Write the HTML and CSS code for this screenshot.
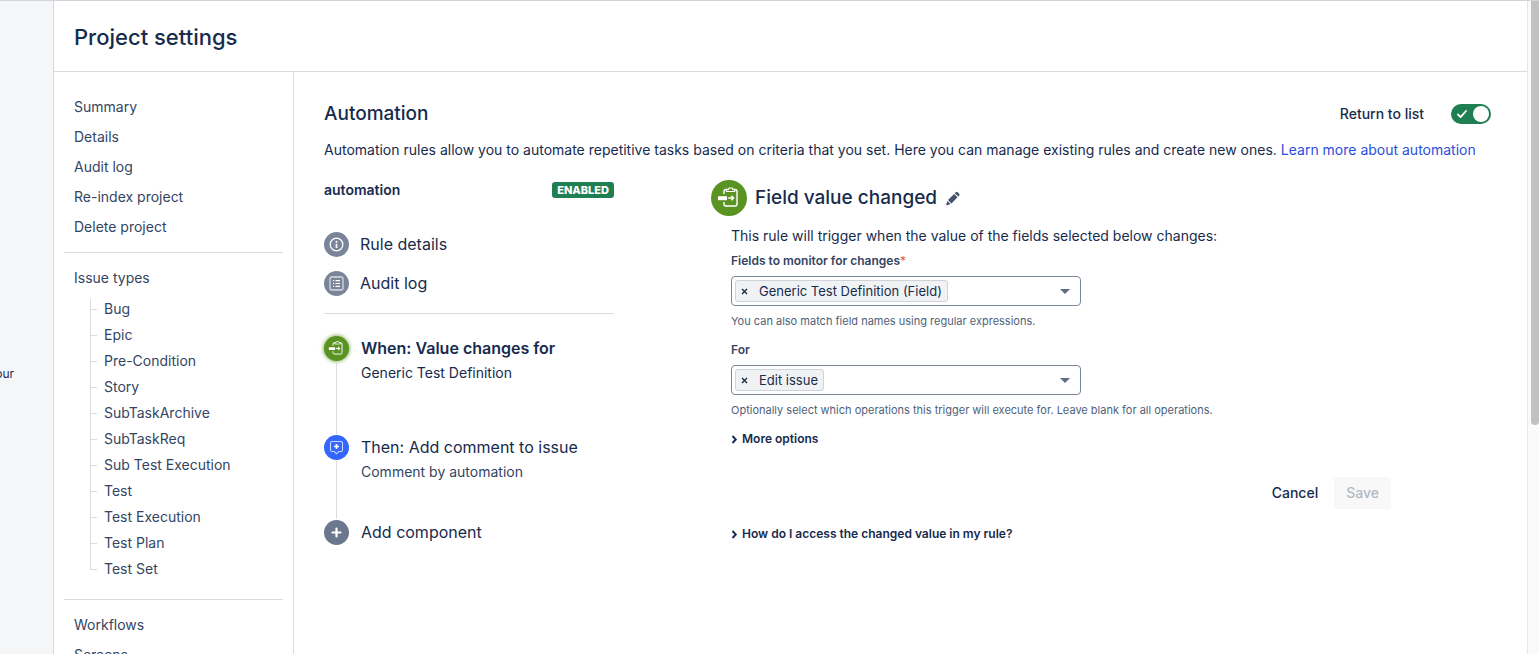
FILE: index.html
```html
<!DOCTYPE html>
<html lang="en">
<head>
    <meta charset="UTF-8">
    <meta name="viewport" content="width=device-width, initial-scale=1.0">
    <title>Project settings - Automation</title>
    <link rel="stylesheet" href="styles.css">
</head>
<body>
    <svg class="sprite" aria-hidden="true">
        <symbol id="icon-trigger" viewBox="0 0 36 36">
            <path d="M13 14v-2.500a2 2 0 0 1 2-2h9a2 2 0 0 1 2 2V24a2 2 0 0 1-2 2h-9a2 2 0 0 1-2-2v-2" fill="none" stroke="#fff" stroke-width="1.400"/>
            <path d="M15.500 11.500V9.500h2l.6-1.500h3l.6 1.500h2v2z" fill="#5b9323" stroke="#fff" stroke-width="1.100"/>
            <path d="M7 16.200h9v4H7z" fill="#fff"/>
            <path d="M17.200 18h5M20.300 15.800l2.300 2.200-2.300 2.200" fill="none" stroke="#fff" stroke-width="1.500"/>
        </symbol>
    </svg>

    <div class="app">
        <aside class="rail"><span class="rail-text">our</span></aside>

        <div class="page">
            <header class="page-header">
                <h1>Project settings</h1>
            </header>

            <div class="page-body">
                <nav class="sidebar">
                    <ul class="nav-group">
                        <li><a href="#">Summary</a></li>
                        <li><a href="#">Details</a></li>
                        <li><a href="#">Audit log</a></li>
                        <li><a href="#">Re-index project</a></li>
                        <li><a href="#">Delete project</a></li>
                    </ul>
                    <div class="nav-group">
                        <a href="#">Issue types</a>
                        <ul class="tree">
                            <li><a href="#">Bug</a></li>
                            <li><a href="#">Epic</a></li>
                            <li><a href="#">Pre-Condition</a></li>
                            <li><a href="#">Story</a></li>
                            <li><a href="#">SubTaskArchive</a></li>
                            <li><a href="#">SubTaskReq</a></li>
                            <li><a href="#">Sub Test Execution</a></li>
                            <li><a href="#">Test</a></li>
                            <li><a href="#">Test Execution</a></li>
                            <li><a href="#">Test Plan</a></li>
                            <li><a href="#">Test Set</a></li>
                        </ul>
                    </div>
                    <ul class="nav-group">
                        <li><a href="#">Workflows</a></li>
                        <li><a href="#">Screens</a></li>
                    </ul>
                </nav>

                <main class="content">
                    <div class="content-header">
                        <h2>Automation</h2>
                        <button class="link-button" type="button">Return to list</button>
                        <label class="toggle">
                            <input type="checkbox" checked aria-label="Rule enabled">
                            <svg width="12" height="12" viewBox="0 0 12 12"><path d="M2 6.500l2.600 2.600L10 3" fill="none" stroke="#fff" stroke-width="1.800" stroke-linecap="round" stroke-linejoin="round"/></svg>
                            <span class="knob"></span>
                        </label>
                    </div>
                    <p class="intro">Automation rules allow you to automate repetitive tasks based on criteria that you set. Here you can manage existing rules and create new ones. <a href="#">Learn more about automation</a></p>

                    <div class="columns">
                        <section class="rule">
                            <div class="rule-head">
                                <h3>automation</h3>
                                <span class="badge">ENABLED</span>
                            </div>
                            <ul class="rule-links">
                                <li>
                                    <span class="icon light">
                                        <svg width="25" height="25" viewBox="0 0 25 25"><circle cx="12.500" cy="12.500" r="6.300" fill="none" stroke="#fff" stroke-width="1.300"/><circle cx="12.500" cy="9.700" r="1" fill="#fff"/><path d="M12.500 11.700v4.300" stroke="#fff" stroke-width="1.700"/></svg>
                                    </span>
                                    <a href="#">Rule details</a>
                                </li>
                                <li>
                                    <span class="icon light">
                                        <svg width="25" height="25" viewBox="0 0 25 25"><rect x="6" y="6" width="13" height="13" rx="2" fill="none" stroke="#d8dbe1" stroke-width="1.300"/><path d="M9 9.700h1.200M9 12.500h1.200M9 15.300h1.200M11.500 9.700H16M11.500 12.500H16M11.500 15.300H16" stroke="#fff" stroke-width="1.200"/></svg>
                                    </span>
                                    <a href="#">Audit log</a>
                                </li>
                            </ul>

                            <ol class="steps">
                                <li class="step active">
                                    <div class="marker">
                                        <span class="icon green"><svg width="25" height="25"><use href="#icon-trigger"/></svg></span>
                                    </div>
                                    <div class="step-text">
                                        <a href="#">When: Value changes for</a>
                                        <p>Generic Test Definition</p>
                                    </div>
                                </li>
                                <li class="step">
                                    <div class="marker">
                                        <span class="icon blue"><svg width="25" height="25" viewBox="0 0 25 25"><path d="M8 6.500h9a1.500 1.500 0 0 1 1.500 1.500v7a1.500 1.500 0 0 1-1.500 1.500h-2.300l-2.200 2.300-2.200-2.300H8A1.500 1.500 0 0 1 6.500 15V8A1.500 1.500 0 0 1 8 6.500z" fill="none" stroke="#c9d6ff" stroke-width="1.100"/><path d="M12.500 9v5M10 11.500h5" stroke="#fff" stroke-width="1.700"/></svg></span>
                                    </div>
                                    <div class="step-text">
                                        <a href="#">Then: Add comment to issue</a>
                                        <p>Comment by automation</p>
                                    </div>
                                </li>
                                <li class="step">
                                    <div class="marker">
                                        <span class="icon gray"><svg width="25" height="25" viewBox="0 0 25 25"><path d="M12.500 8.500v8M8.500 12.500h8" stroke="#fff" stroke-width="2.200" stroke-linecap="round"/></svg></span>
                                    </div>
                                    <div class="step-text">
                                        <a href="#">Add component</a>
                                    </div>
                                </li>
                            </ol>
                        </section>

                        <section class="editor">
                            <div class="editor-head">
                                <span class="icon green large"><svg width="36" height="36"><use href="#icon-trigger"/></svg></span>
                                <h2>Field value changed</h2>
                                <button class="edit" type="button" aria-label="Rename">
                                    <svg width="16" height="16" viewBox="0 0 16 16"><path d="M10.800 2.300a1.300 1.300 0 0 1 1.800 0l1.600 1.500a1.300 1.300 0 0 1 0 1.800l-1 1-3.400-3.300zM9.100 4l3.400 3.300-6 6.200-3.500-3.400zM2.300 10.900l3.300 3.200-3.500 1.100c-.6.200-1-.2-.8-.8z" fill="#44516c"/></svg>
                                </button>
                            </div>

                            <form class="editor-form">
                                <p class="description">This rule will trigger when the value of the fields selected below changes:</p>

                                <label for="fields">Fields to monitor for changes<span class="required">*</span></label>
                                <div class="multi-select">
                                    <span class="tag"><button type="button" aria-label="Remove"><svg width="7" height="7" viewBox="0 0 7 7"><path d="M1 1l5 5M6 1L1 6" stroke="#172b4d" stroke-width="1.400"/></svg></button>Generic Test Definition (Field)</span>
                                    <select id="fields"><option></option></select>
                                </div>
                                <p class="hint">You can also match field names using regular expressions.</p>

                                <label for="operations">For</label>
                                <div class="multi-select">
                                    <span class="tag"><button type="button" aria-label="Remove"><svg width="7" height="7" viewBox="0 0 7 7"><path d="M1 1l5 5M6 1L1 6" stroke="#172b4d" stroke-width="1.400"/></svg></button>Edit issue</span>
                                    <select id="operations"><option></option></select>
                                </div>
                                <p class="hint">Optionally select which operations this trigger will execute for. Leave blank for all operations.</p>

                                <button class="expander" type="button"><svg width="7" height="9" viewBox="0 0 7 9"><path d="M1.500 1l3.300 3.500L1.500 8" fill="none" stroke="#172b4d" stroke-width="1.900"/></svg>More options</button>

                                <div class="actions">
                                    <button class="cancel" type="button">Cancel</button>
                                    <button class="save" type="submit" disabled>Save</button>
                                </div>

                                <button class="expander" type="button"><svg width="7" height="9" viewBox="0 0 7 9"><path d="M1.500 1l3.300 3.500L1.500 8" fill="none" stroke="#172b4d" stroke-width="1.900"/></svg>How do I access the changed value in my rule?</button>
                            </form>
                        </section>
                    </div>
                </main>
            </div>
        </div>

        <div class="scroll-track"><div class="scroll-thumb"></div></div>
    </div>
</body>
</html>
```
FILE: styles.css
```css
* {
    box-sizing: border-box;
}

body {
    margin: 0;
    color: #172b4d;
    background: #fff;
    font-family: Inter, "Liberation Sans", sans-serif;
    font-size: 14px;
    line-height: 20px;
}

h1, h2, h3, p, ul, ol {
    margin: 0;
    padding: 0;
}

ul, ol {
    list-style: none;
}

a {
    color: inherit;
    text-decoration: none;
}

button {
    border: 0;
    padding: 0;
    background: none;
    color: inherit;
    font: inherit;
    cursor: pointer;
}

svg {
    display: block;
}

.sprite {
    display: none;
}

.app {
    display: flex;
    height: 100vh;
    overflow: hidden;
    border-top: 1px solid #d0d4db;
}

/* Left rail */
.rail {
    flex: 0 0 54px;
    display: flex;
    align-items: center;
    padding-top: 92px;
    background: #f5f6f8;
    border-right: 1px solid #d5d7db;
    overflow: hidden;
}

.rail-text {
    width: 14px;
    display: flex;
    justify-content: flex-end;
    font-size: 12px;
}

.page {
    flex: 1;
    min-width: 0;
    display: flex;
    flex-direction: column;
}

.page-header {
    flex: none;
    padding: 20px 20px 18px;
    border-bottom: 1px solid #dadcdf;
}

h1 {
    font-size: 22px;
    font-weight: 500;
    line-height: 32px;
}

h2 {
    font-size: 19px;
    font-weight: 500;
    line-height: 24px;
}

.page-body {
    flex: 1;
    min-height: 0;
    display: flex;
}

/* Sidebar */
.sidebar {
    flex: 0 0 240px;
    padding: 10px;
    border-right: 1px solid #dadcdf;
    color: #344563;
    overflow: hidden;
}

.nav-group {
    padding: 10px;
}

.nav-group + .nav-group {
    border-top: 1px solid #dadcdf;
}

.nav-group a {
    display: block;
    line-height: 30px;
}

.tree {
    padding: 3px 0 7px 16px;
}

.tree li {
    position: relative;
    padding-left: 14px;
}

.tree a {
    line-height: 26px;
}

.tree li::before {
    content: "";
    position: absolute;
    left: 0;
    bottom: 12px;
    width: 6px;
    height: 26px;
    border-left: 1px solid #dadcdf;
    border-bottom: 1px solid #dadcdf;
}

.tree li:first-child::before {
    height: 10px;
}

/* Main content */
.content {
    flex: 1;
    min-width: 0;
    padding: 30px 36px 0 30px;
}

.content-header {
    display: flex;
    align-items: center;
}

.content-header h2 {
    flex: 1;
}

.link-button {
    font-weight: 500;
    margin-right: 27px;
}

.toggle {
    display: flex;
    align-items: center;
    justify-content: space-between;
    width: 40px;
    height: 20px;
    padding: 0 2px 0 5px;
    border-radius: 10px;
    background: #1f7f52;
}

.toggle input {
    position: absolute;
    opacity: 0;
}

.knob {
    width: 16px;
    height: 16px;
    border-radius: 50%;
    background: #fff;
}

.intro {
    margin-top: 14px;
}

.intro a {
    color: #2a4fdc;
}

.columns {
    display: flex;
    align-items: flex-start;
    gap: 97px;
    margin-top: 20px;
}

.rule {
    flex: 0 0 290px;
}

.rule-head {
    display: flex;
    align-items: center;
    justify-content: space-between;
}

h3 {
    font-size: 14px;
    font-weight: 600;
}

.badge {
    padding: 0 5px;
    border-radius: 3px;
    background: #1f7f52;
    color: #fff;
    font-size: 11px;
    font-weight: 800;
    line-height: 16px;
}

.rule-links {
    display: grid;
    gap: 14px;
    margin-top: 32px;
    padding-bottom: 17px;
    border-bottom: 1px solid #dadcdf;
    font-size: 16px;
}

.rule-links li {
    display: flex;
    align-items: flex-start;
    gap: 11px;
    line-height: 24px;
}

.icon {
    flex: none;
    display: block;
    width: 25px;
    height: 25px;
    border-radius: 50%;
}

.light { background: #7a8599; }
.gray { background: #6b778c; }
.blue { background: #3366ff; }
.green { background: #5b9323; }

.large {
    width: 36px;
    height: 36px;
}

.active .icon {
    box-shadow: 0 0 4px #5b9323;
}

/* Steps with the line that joins them */
.steps {
    margin-top: 22px;
}

.step {
    display: flex;
    gap: 12px;
}

.marker {
    display: flex;
    flex-direction: column;
    align-items: center;
    gap: 1px;
}

.step:not(:last-child) .marker::after {
    content: "";
    flex: 1;
    width: 1px;
    margin-bottom: 1px;
    background: #dadcdf;
}

.step-text {
    padding-bottom: 36px;
    font-size: 16px;
    line-height: 25px;
}

.step-text p {
    font-size: 14px;
    line-height: 24px;
    color: #344563;
}

.active .step-text {
    padding-bottom: 50px;
}

.active a {
    font-weight: 600;
}

.active .step-text p {
    color: #172b4d;
}

/* Component editor */
.editor {
    flex: 0 1 680px;
}

.editor-head {
    display: flex;
    align-items: center;
    gap: 8px;
}

.editor-form {
    display: flex;
    flex-direction: column;
    align-items: flex-start;
    padding: 10px 0 0 20px;
}

.editor-form label {
    margin: 5px 0;
    color: #344563;
    font-size: 12px;
    font-weight: 600;
}

.required {
    color: #e0565b;
    font-weight: 400;
}

.multi-select {
    display: flex;
    align-items: center;
    width: 350px;
    height: 30px;
    padding: 3px;
    border: 1px solid #7a869a;
    border-radius: 4px;
    position: relative;
}

.multi-select::after {
    content: "";
    position: absolute;
    right: 10px;
    border: 5px solid transparent;
    border-top-color: #5e6c84;
    border-bottom: 0;
}

.multi-select select {
    flex: 1;
    height: 22px;
    border: 0;
    background: none;
    appearance: none;
}

.tag {
    display: flex;
    align-items: center;
    gap: 11px;
    padding: 0 5px;
    border: 1px solid #cfd2d8;
    border-radius: 3px;
    background: #f1f2f4;
    font-size: 13px;
}

.hint {
    margin-top: 5px;
    color: #505f79;
    font-size: 11px;
}

.hint + label {
    margin-top: 9px;
}

.expander {
    display: flex;
    align-items: center;
    gap: 4px;
    margin-top: 9px;
    font-size: 12px;
    font-weight: 600;
}

.actions {
    align-self: stretch;
    display: flex;
    align-items: center;
    justify-content: flex-end;
    gap: 16px;
    margin: 28px 0 6px;
    font-weight: 500;
}

.save {
    padding: 6px 12px;
    border-radius: 3px;
    background: #f8f8f8;
    color: #b3b9c4;
}

/* Scrollbar */
.scroll-track {
    flex: 0 0 12px;
    padding-left: 3px;
    border-left: 1px solid #e6e6e6;
    background: #fafafa;
}

.scroll-thumb {
    height: 65%;
    border-radius: 0 0 4px 4px;
    background: #c1c1c1;
}
```
